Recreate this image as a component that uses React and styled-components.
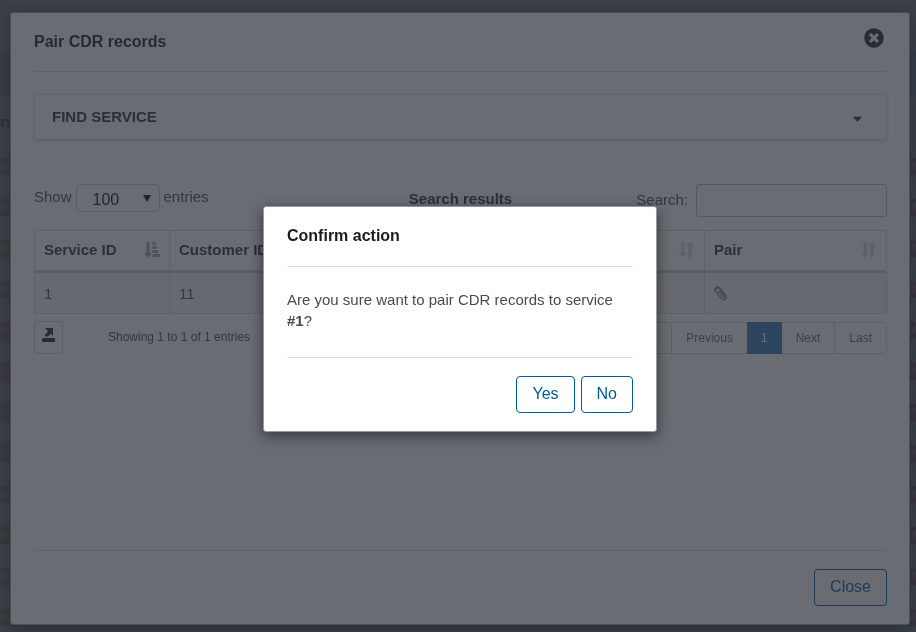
import React from "react";
import styled, { createGlobalStyle } from "styled-components";
import { FaTimesCircle, FaCaretDown } from "react-icons/fa";

const GlobalStyle = createGlobalStyle`
  *, *::before, *::after { box-sizing: border-box; }
  html, body, #root { height: 100%; }
  body {
    margin: 0;
    background: #eef0f3;
    color: #4a4a4a;
    font: 15px/21px "Liberation Sans", Arial, sans-serif;
  }
  button, input, select { font: inherit; color: inherit; }
  h2, p { margin: 0; }
`;

const Page = styled.div`
  height: 100vh;
  overflow: hidden;
  padding-top: 7px;
  background: #eef0f3;
`;
const PageBar = styled.div`
  height: 46px;
  border-bottom: 1px solid #ccc;
  border-top: 1px solid #ccc;
`;
const PageBand = styled.div`
  height: 44px;
  background: #b4cfe4;
`;
const PageTable = styled.div`
  display: flex;
  flex-direction: column;
`;
const PageRow = styled.div`
  display: flex;
  flex: none;
  justify-content: space-between;
  align-items: center;
  height: ${(p) => (p.$head ? "49px" : "41px")};
  overflow: hidden;
  border-bottom: 1px solid #cfd4d8;
  background: ${(p) => (p.$head ? "#eef0f3" : "#dfe8ee")};
  font-weight: bold;
`;
const Tag = styled.span`
  height: 17px;
  padding: 0 2px;
  margin: ${(p) => (p.$danger ? "0 -6px 0 0" : "0 0 0 -4px")};
  background: ${(p) => (p.$danger ? "#c66a74" : "#d6a968")};
  color: #dfe8ee;
  font-size: 11px;
  line-height: 17px;
`;

const Backdrop = styled.div`
  position: fixed;
  inset: 0;
  display: flex;
  align-items: ${(p) => (p.$center ? "center" : "stretch")};
  justify-content: center;
  padding: ${(p) => (p.$center ? "6px 0 0 4px" : "12px 6px 7px 10px")};
  background: rgba(41, 45, 56, 0.7);
`;
const Dialog = styled.section`
  display: flex;
  flex-direction: column;
  width: ${(p) => p.$width};
  padding: ${(p) => (p.$wide ? "0 22px 0 23px" : "0 23px")};
  border: 1px solid #999;
  border-radius: 3px;
  background: #fff;
  box-shadow: 0 4px 14px rgba(0, 0, 0, 0.5);
`;
const DialogHeader = styled.header`
  display: flex;
  justify-content: space-between;
  align-items: center;
  height: ${(p) => (p.$tall ? "59px" : "60px")};
  padding-bottom: ${(p) => (p.$tall ? "0" : "2px")};
  border-bottom: 1px solid #ddd;
`;
const DialogTitle = styled.h2`
  color: #1c1c1c;
  font-size: 16px;
  line-height: 20px;
`;
const DialogBody = styled.div`
  flex: 1;
  padding: 22px 0;
`;
const Message = styled.p`
  min-height: 46px;
`;
const DialogFooter = styled.footer`
  display: flex;
  justify-content: flex-end;
  gap: 6px;
  padding: 18px 0;
  border-top: 1px solid #ddd;
`;
const CloseIconButton = styled.button`
  display: flex;
  padding: 0;
  margin: 0 3px 8px 0;
  border: 0;
  background: none;
  color: #262626;
  font-size: 20px;
`;
const OutlineButton = styled.button`
  height: 37px;
  padding: 0 15px 2px;
  border: 1px solid #005aa0;
  border-radius: 4px;
  background: #fff;
  color: #005aa0;
  font-size: 16px;
`;

const FindPanel = styled.button`
  display: flex;
  justify-content: space-between;
  align-items: center;
  width: 100%;
  height: 46px;
  padding: 0 21px 2px 17px;
  border: 1px solid #ddd;
  background: #fff;
  box-shadow: 0 1px 3px rgba(0, 0, 0, 0.15);
  color: #333;
  font-weight: bold;
  svg { margin-top: 4px; }
`;
const Controls = styled.div`
  display: grid;
  grid-template-columns: 1fr auto 1fr;
  align-items: start;
  height: 33px;
  margin: 44px 0 13px;
`;
const LengthLabel = styled.label`
  display: flex;
  align-items: flex-start;
  gap: 4px;
  line-height: 26px;
`;
const LengthSelect = styled.span`
  display: flex;
  align-items: center;
  width: 84px;
  height: 28px;
  padding-right: 8px;
  border: 1px solid #ccc;
  border-radius: 5px;
  color: #111;
  select {
    flex: 1;
    height: 26px;
    padding: 4px 0 0 16px;
    border: 0;
    appearance: none;
    background: none;
    font-size: 16px;
    line-height: 20px;
  }
`;
const Caption = styled.strong`
  color: #333;
  line-height: 29px;
`;
const SearchLabel = styled.label`
  display: flex;
  justify-content: flex-end;
  gap: 8px;
  line-height: 31px;
`;
const SearchInput = styled.input`
  width: 191px;
  height: 33px;
  border: 1px solid #bbb;
  border-radius: 3px;
  background: #fff;
`;
const ResultsTable = styled.table`
  width: 100%;
  table-layout: fixed;
  border-collapse: collapse;
  th, td {
    height: 41px;
    padding: 0 9px;
    border: 1px solid #d8d8d8;
    text-align: left;
  }
  th {
    padding-bottom: 2px;
    border-bottom: 3px solid #d0d0d0;
    color: #333;
  }
  td {
    height: 42px;
    background: #f4f4f4;
  }
`;
const Col = styled.col`
  width: ${(p) => p.$width};
`;
const HeadCell = styled.div`
  display: flex;
  justify-content: space-between;
  align-items: center;
`;
const LinkButton = styled.button`
  display: flex;
  padding: 0;
  border: 0;
  background: none;
`;
const BottomRow = styled.div`
  display: flex;
  align-items: center;
  margin-top: 7px;
  font-size: 12px;
`;
const ExportButton = styled.button`
  display: flex;
  justify-content: center;
  padding: 6px 0 0;
  width: 29px;
  height: 33px;
  border: 1px solid #ccc;
  border-radius: 3px;
  background: #fff;
  color: #262626;
`;
const Info = styled.p`
  flex: 1;
  padding-left: 45px;
`;
const Pager = styled.nav`
  display: flex;
  align-self: flex-end;
  height: 32px;
  border: 1px solid #d4d4d4;
  border-radius: 5px;
`;
const PageLink = styled.a`
  padding: 0 14px;
  margin: ${(p) => (p.$active ? "-1px 0" : "0")};
  border-left: ${(p) => (p.$line ? "1px solid #d4d4d4" : "0")};
  background: ${(p) => (p.$active ? "#337ab7" : "transparent")};
  color: ${(p) => (p.$active ? "#fff" : "#666")};
  line-height: ${(p) => (p.$active ? "32px" : "30px")};
  text-decoration: none;
`;

const SortIcon = ({ active }) => (
  <svg width="16" height="16" viewBox="0 0 16 16" fill={active ? "#a0a0a0" : "#d6d6d6"} aria-hidden="true">
    <path d="M2.5 0h3v11h2.500L4 15.500 0 11h2.500z" />
    {active ? (
      <path d="M8.500 0h3v3h-3zM8.500 4h4v3h-4zM8.500 8h5.500v3H8.500zM8.500 12H16v3H8.500z" />
    ) : (
      <path d="M9.500 15.500h3v-11H15L11 0 7 4.500h2.500z" />
    )}
  </svg>
);

const PaperclipIcon = () => (
  <svg width="14" height="15" viewBox="0 0 14 15" fill="none" stroke="#444" strokeLinecap="round" aria-hidden="true">
    <path d="M4 5l5 6c1 1 2.200 0 1.400-1.100L5.300 3.200C3.300.8 0 3 1.800 5.600l5.500 6.900C9.800 15.700 14 12.400 11.700 9.300L6.500 2.600C5.300 1 3.200.2 1.800 1.700.8 2.700.8 4 1.300 4.800" />
  </svg>
);

const ExportIcon = () => (
  <svg width="13" height="14" viewBox="0 0 13 14" fill="currentColor" aria-hidden="true">
    <path d="M3 0h8v8L8.800 5.800 6 8.600H3.800L3 7.500V6.200l1.500-.5L6 3z" />
    <path d="M0 11l1-1h11l1 1v3H0z" />
  </svg>
);

const SelectArrow = () => (
  <svg width="8" height="7" viewBox="0 0 8 7" fill="#111" aria-hidden="true">
    <path d="M0 0h8L4 7z" />
  </svg>
);

const pageRows = Array.from({ length: 12 }, (_, i) => i);

export default function App() {
  return (
    <>
      <GlobalStyle />
      <Page aria-hidden="true">
        <PageBar />
        <PageBand />
        <PageTable>
          <PageRow $head>rv</PageRow>
          {pageRows.map((i) => (
            <PageRow key={i}>
              <Tag>NO</Tag>
              <Tag $danger>IN</Tag>
            </PageRow>
          ))}
        </PageTable>
      </Page>

      <Backdrop>
        <Dialog $wide $width="100%" role="dialog" aria-labelledby="pair-title">
          <DialogHeader $tall>
            <DialogTitle id="pair-title">Pair CDR records</DialogTitle>
            <CloseIconButton type="button" aria-label="Close dialog">
              <FaTimesCircle />
            </CloseIconButton>
          </DialogHeader>
          <DialogBody>
            <FindPanel type="button" aria-expanded="false">
              FIND SERVICE
              <FaCaretDown />
            </FindPanel>
            <Controls>
              <LengthLabel>
                Show
                <LengthSelect>
                  <select defaultValue="100">
                    <option>100</option>
                  </select>
                  <SelectArrow />
                </LengthSelect>
                entries
              </LengthLabel>
              <Caption>Search results</Caption>
              <SearchLabel>
                Search:
                <SearchInput type="search" />
              </SearchLabel>
            </Controls>
            <ResultsTable>
              <colgroup>
                <Col $width="135px" />
                <Col />
                <Col $width="182px" />
              </colgroup>
              <thead>
                <tr>
                  <th><HeadCell>Service ID<SortIcon active /></HeadCell></th>
                  <th><HeadCell>Customer ID<SortIcon /></HeadCell></th>
                  <th><HeadCell>Pair<SortIcon /></HeadCell></th>
                </tr>
              </thead>
              <tbody>
                <tr>
                  <td>1</td>
                  <td>11</td>
                  <td>
                    <LinkButton type="button" aria-label="Pair"><PaperclipIcon /></LinkButton>
                  </td>
                </tr>
              </tbody>
            </ResultsTable>
            <BottomRow>
              <ExportButton type="button" aria-label="Export"><ExportIcon /></ExportButton>
              <Info>Showing 1 to 1 of 1 entries</Info>
              <Pager aria-label="Pagination">
                <PageLink href="#first">First</PageLink>
                <PageLink href="#previous" $line>Previous</PageLink>
                <PageLink href="#1" $active aria-current="page">1</PageLink>
                <PageLink href="#next">Next</PageLink>
                <PageLink href="#last" $line>Last</PageLink>
              </Pager>
            </BottomRow>
          </DialogBody>
          <DialogFooter>
            <OutlineButton type="button">Close</OutlineButton>
          </DialogFooter>
        </Dialog>
      </Backdrop>

      <Backdrop $center>
        <Dialog $width="394px" role="alertdialog" aria-labelledby="confirm-title">
          <DialogHeader>
            <DialogTitle id="confirm-title">Confirm action</DialogTitle>
          </DialogHeader>
          <DialogBody>
            <Message>
              Are you sure want to pair CDR records to service <strong>#1</strong>?
            </Message>
          </DialogBody>
          <DialogFooter>
            <OutlineButton type="button">Yes</OutlineButton>
            <OutlineButton type="button">No</OutlineButton>
          </DialogFooter>
        </Dialog>
      </Backdrop>
    </>
  );
}
